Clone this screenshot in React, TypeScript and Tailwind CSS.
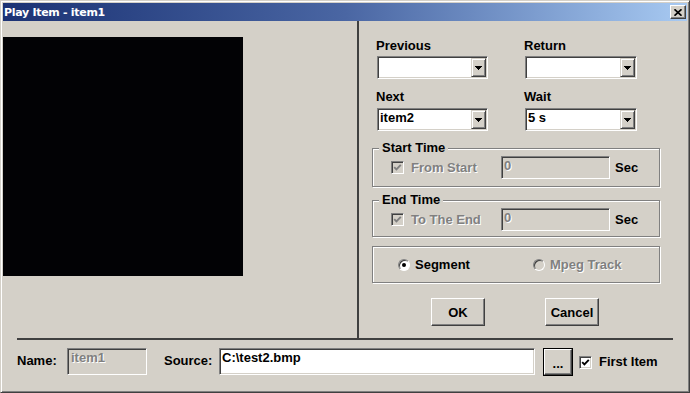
import React from "react";

const sunken =
  "border border-t-[#808080] border-l-[#808080] border-r-white border-b-white shadow-[inset_1px_1px_0_#404040,inset_-1px_-1px_0_#d4d0c8] p-[1px]";
const raised =
  "border border-t-white border-l-white border-r-[#404040] border-b-[#404040] shadow-[inset_-1px_-1px_0_#808080]";
const comboBtn =
  "border border-t-[#d4d0c8] border-l-[#d4d0c8] border-r-[#404040] border-b-[#404040] shadow-[inset_1px_1px_0_#fff,inset_-1px_-1px_0_#808080]";
const disabledText = "text-[#808080] [text-shadow:1px_1px_0_#fff]";

function Arrow() {
  return (
    <svg width="7" height="4" viewBox="0 0 7 4" shapeRendering="crispEdges">
      <rect x="0" y="0" width="7" height="1" fill="#000" />
      <rect x="1" y="1" width="5" height="1" fill="#000" />
      <rect x="2" y="2" width="3" height="1" fill="#000" />
      <rect x="3" y="3" width="1" height="1" fill="#000" />
    </svg>
  );
}

function Combo({ value, w }: { value: string; w: string }) {
  return (
    <div className={`flex h-[23px] ${w} bg-white ${sunken}`}>
      <div className="flex-1 pl-[1px] text-black">{value}</div>
      <div className={`flex h-full w-[15px] items-center justify-center bg-[#d4d0c8] ${comboBtn}`}>
        <Arrow />
      </div>
    </div>
  );
}

function Check({ disabled }: { disabled?: boolean }) {
  return (
    <div
      className={`flex h-[13px] w-[13px] items-center justify-center ${sunken} p-0 ${
        disabled ? "bg-[#d4d0c8]" : "bg-white"
      }`}
    >
      <svg width="9" height="9" viewBox="0 0 9 9">
        <path
          d="M1.2 4.2 L3.4 6.4 L7.8 1.8"
          stroke={disabled ? "#808080" : "#000"}
          strokeWidth="1.9"
          fill="none"
        />
      </svg>
    </div>
  );
}

function Radio({ checked, disabled }: { checked?: boolean; disabled?: boolean }) {
  return (
    <div
      className={`flex h-[12px] w-[12px] items-center justify-center rounded-full border border-t-[#808080] border-l-[#808080] border-r-white border-b-white shadow-[inset_1px_1px_0_#404040] ${
        disabled ? "bg-[#d4d0c8]" : "bg-white"
      }`}
    >
      {checked && <div className="h-[4px] w-[4px] rounded-full bg-black" />}
    </div>
  );
}

function Group({
  title,
  h,
  children,
}: {
  title?: string;
  h: string;
  children: React.ReactNode;
}) {
  return (
    <div
      className={`relative -ml-[4px] w-[288px] ${h} border border-[#808080] shadow-[inset_1px_1px_0_#fff,1px_1px_0_#fff]`}
    >
      {title && (
        <span className="absolute -top-[9px] left-[6px] bg-[#d4d0c8] px-[3px] text-black">
          {title}
        </span>
      )}
      {children}
    </div>
  );
}

function TimeRow({ label }: { label: string }) {
  return (
    <div className="flex h-[23px] items-center pl-[18px]">
      <div className="flex w-[110px] items-center">
        <Check disabled />
        <span className={`ml-[7px] ${disabledText}`}>{label}</span>
      </div>
      <div className={`h-[23px] w-[109px] bg-[#d4d0c8] ${sunken}`}>
        <span className={`pl-[1px] ${disabledText}`}>0</span>
      </div>
      <span className="ml-[5px] text-black">Sec</span>
    </div>
  );
}

function Button({ children, w }: { children: React.ReactNode; w: string }) {
  return (
    <div className={`flex h-[28px] ${w} items-center justify-center bg-[#d4d0c8] ${raised} text-black`}>
      {children}
    </div>
  );
}

export default function App() {
  return (
    <div className="flex h-[393px] w-[690px] flex-col border border-t-[#d4d0c8] border-l-[#d4d0c8] border-r-[#404040] border-b-[#404040] bg-[#d4d0c8] p-[2px] font-['Liberation_Sans',Arial,sans-serif] text-[13px] font-bold leading-[15px] shadow-[inset_1px_1px_0_#fff,inset_-1px_-1px_0_#808080]">
      {/* Title bar */}
      <div className="flex h-[18px] shrink-0 items-center bg-gradient-to-r from-[#1c3274] via-[#4a66a3] to-[#a8caf2] pl-[1px]">
        <span className="font-['DejaVu_Sans',sans-serif] text-[11px] tracking-[-0.3px] text-white">Play Item - item1</span>
        <div className={`ml-auto mr-[1px] flex h-[14px] w-[16px] items-center justify-center bg-[#d4d0c8] ${raised}`}>
          <svg width="8" height="7" viewBox="0 0 8 7">
            <path d="M0.5 0.3 L7.5 6.7 M7.5 0.3 L0.5 6.7" stroke="#000" strokeWidth="1.7" fill="none" />
          </svg>
        </div>
      </div>

      {/* Main */}
      <div className="flex h-[317px] shrink-0">
        <div className="w-[354px] pt-[16px]">
          <div className="h-[239px] w-[240px] bg-[#020205]" />
        </div>
        <div className="w-[2px] bg-[#404040]" />
        <div className="flex-1 pl-[17px] pt-[17px]">
          <div className="flex">
            <div className="w-[148px]">
              <div className="text-black">Previous</div>
              <div className="ml-[1px] mt-[3px]">
                <Combo value="" w="w-[111px]" />
              </div>
            </div>
            <div>
              <div className="text-black">Return</div>
              <div className="ml-[1px] mt-[3px]">
                <Combo value="" w="w-[112px]" />
              </div>
            </div>
          </div>
          <div className="mt-[10px] flex">
            <div className="w-[148px]">
              <div className="text-black">Next</div>
              <div className="ml-[1px] mt-[4px]">
                <Combo value="item2" w="w-[111px]" />
              </div>
            </div>
            <div>
              <div className="text-black">Wait</div>
              <div className="ml-[1px] mt-[4px]">
                <Combo value="5 s" w="w-[112px]" />
              </div>
            </div>
          </div>

          <div className="mt-[17px]">
            <Group title="Start Time" h="h-[39px]">
              <div className="pt-[7px]">
                <TimeRow label="From Start" />
              </div>
            </Group>
          </div>
          <div className="mt-[13px]">
            <Group title="End Time" h="h-[37px]">
              <div className="pt-[7px]">
                <TimeRow label="To The End" />
              </div>
            </Group>
          </div>
          <div className="mt-[9px]">
            <Group h="h-[37px]">
              <div className="flex h-full items-center pl-[25px]">
                <div className="flex w-[135px] items-center">
                  <Radio checked />
                  <span className="ml-[5px] text-black">Segment</span>
                </div>
                <div className="flex items-center">
                  <Radio disabled />
                  <span className={`ml-[5px] ${disabledText}`}>Mpeg Track</span>
                </div>
              </div>
            </Group>
          </div>
          <div className="ml-[55px] mt-[15px] flex gap-[60px]">
            <Button w="w-[54px]">OK</Button>
            <Button w="w-[54px]">Cancel</Button>
          </div>
        </div>
      </div>

      {/* divider */}
      <div className="mx-[14px] h-[2px] shrink-0 bg-[#404040]" />

      {/* Bottom row */}
      <div className="mt-[8px] flex items-start px-[14px]">
        <span className="w-[50px] pt-[5px] text-black">Name:</span>
        <div className={`h-[27px] w-[80px] bg-[#d4d0c8] ${sunken}`}>
          <span className={`pl-[2px] ${disabledText}`}>item1</span>
        </div>
        <span className="ml-[17px] w-[55px] pt-[5px] text-black">Source:</span>
        <div className={`h-[27px] w-[316px] bg-white ${sunken}`}>
          <span className="pl-[1px] text-black">C:\test2.bmp</span>
        </div>
        <div className="ml-[8px] h-[28px] w-[30px] border border-black">
          <div className={`flex h-full w-full items-end justify-center bg-[#d4d0c8] pb-[5px] ${raised}`}>
            <span className="leading-[10px] text-black">...</span>
          </div>
        </div>
        <div className="ml-[6px] mt-[8px]">
          <Check />
        </div>
        <span className="ml-[7px] pt-[6px] text-black">First Item</span>
      </div>
    </div>
  );
}
